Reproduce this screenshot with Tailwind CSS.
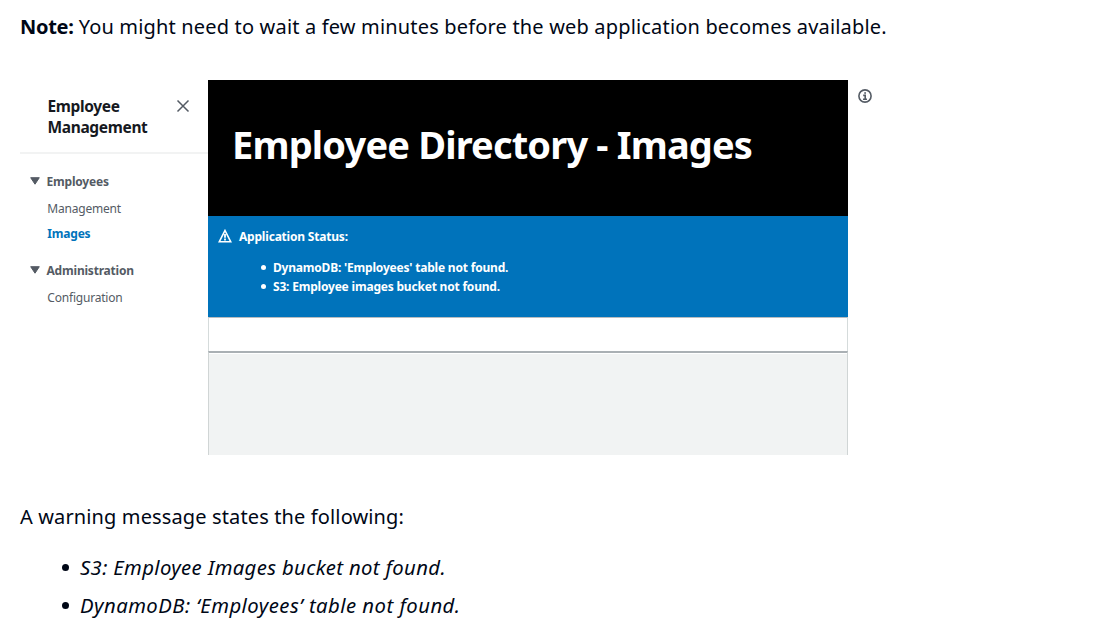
<!DOCTYPE html>
<html lang="en">
<head>
<meta charset="utf-8">
<title>Employee Directory</title>
<script src="https://cdn.jsdelivr.net/npm/@tailwindcss/browser@4"></script>
</head>
<body class="h-[631px] overflow-hidden bg-white px-5 font-['Noto_Sans',sans-serif] text-[#000716]">
<p class="h-20 pt-3 text-[20px] leading-[30px] whitespace-nowrap"><b class="tracking-[-0.3px]">Note:</b> <span class="tracking-[0.17px]">You might need to wait a few minutes before the web application becomes available.</span></p>
<div class="flex h-[375px]">
  <nav class="w-[188px] shrink-0 text-[12px] tracking-[-0.2px] text-[#545b64]">
    <div class="flex h-[74px] justify-between border-b-2 border-[#f2f3f3] pt-4 pr-[18px] pl-[27.5px]">
      <h2 class="text-[15.5px] leading-[20.6px] font-bold tracking-[-0.35px] text-[#16191f]">Employee<br>Management</h2>
      <svg class="mt-[3px] size-3.5" viewBox="0 0 14 14" fill="none" stroke="#545b64" stroke-width="1.5"><path d="M1.5 1.5l11 11M12.5 1.5l-11 11"/></svg>
    </div>
    <div class="mt-[14px] flex h-[27px] items-center pl-[10px] font-bold"><svg class="mr-[6.5px] mb-0.5 h-2 w-2.5" viewBox="0 0 10 8"><path d="M.7.7h8.6L5 7.2z" fill="#545b64" stroke="#545b64" stroke-linejoin="round"/></svg><span class="pt-px">Employees</span></div>
    <div class="flex h-[26px] items-center pt-px pl-[27.3px]">Management</div>
    <div class="flex h-[26px] items-center pl-[27.3px] font-bold text-[#0073bb]">Images</div>
    <div class="mt-[10px] flex h-[27px] items-center pl-[10px] font-bold"><svg class="mr-[6.5px] mb-0.5 h-2 w-2.5" viewBox="0 0 10 8"><path d="M.7.7h8.6L5 7.2z" fill="#545b64" stroke="#545b64" stroke-linejoin="round"/></svg><span class="pt-px">Administration</span></div>
    <div class="flex h-[26px] items-center pt-px pl-[27.3px]">Configuration</div>
  </nav>
  <main class="flex w-[640px] shrink-0 flex-col">
    <header class="h-[136px] bg-black pt-[38px] pl-[24px]"><h1 class="text-[38px] leading-[52px] font-bold tracking-[-0.83px] text-white">Employee Directory - Images</h1></header>
    <section class="h-[101px] bg-[#0073bb] pt-[11px] pl-[10px] text-[12px] font-bold tracking-[-0.2px] text-white">
      <div class="flex h-[19px] items-center"><svg class="mr-[7px] mb-0.5 size-3.5" viewBox="0 0 14 14" fill="none" stroke="#fff" stroke-width="1.6"><path d="M7 1.5L12.8 12.8H1.2z"/><path d="M7 5v3.8M7 9.6v1.8" stroke-width="1.8"/></svg><span class="pt-px">Application Status:</span></div>
      <ul class="mt-3 pl-[43px] leading-[19px]">
        <li class="flex items-center"><i class="mr-[7px] size-[5px] rounded-full bg-white"></i>DynamoDB: 'Employees' table not found.</li>
        <li class="flex items-center"><i class="mr-[7px] size-[5px] rounded-full bg-white"></i>S3: Employee images bucket not found.</li>
      </ul>
    </section>
    <div class="h-[34px] border-x border-t border-x-[#d5dbdb] border-t-[#b8bcbf]"></div>
    <div class="flex grow flex-col border-x border-t-2 border-x-[#d0d5d5] border-t-[#aab0b4] bg-[#f1f3f3]"><div class="h-px bg-white"></div></div>
  </main>
  <svg class="mt-[9px] ml-[10px] size-3.5" viewBox="0 0 14 14" fill="none" stroke="#545b64" stroke-width="1.6"><circle cx="7" cy="7" r="6.1"/><path d="M5.2 6.4H7.2v3.8M5 10.2h4M6.2 4h1.8"/></svg>
</div>
<p class="pt-[47px] text-[20px] leading-[30px] tracking-[0.13px]">A warning message states the following:</p>
<ul class="mt-4 pl-[42px] text-[20.3px] leading-[38px] italic">
  <li class="flex items-center tracking-[0.36px]"><i class="mr-[11px] size-[7px] rounded-full bg-[#000716]"></i>S3: Employee Images bucket not found.</li>
  <li class="flex items-center tracking-[0.47px]"><i class="mr-[11px] size-[7px] rounded-full bg-[#000716]"></i>DynamoDB: ‘Employees’ table not found.</li>
</ul>
</body>
</html>
